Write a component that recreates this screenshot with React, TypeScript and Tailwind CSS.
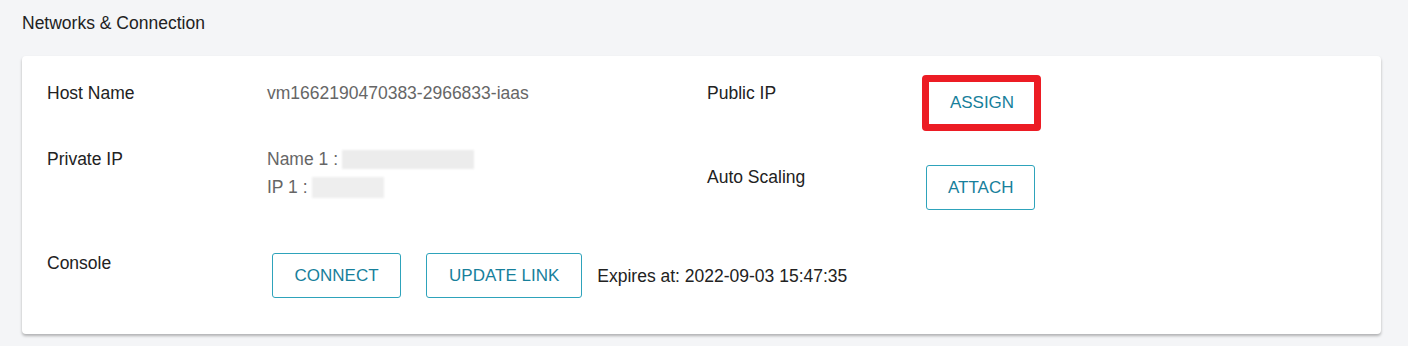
export default function App() {
  const font = { fontFamily: '"Liberation Sans", Arial, sans-serif' };
  const btn =
    'shrink-0 whitespace-nowrap h-[45px] border border-[#2ea3bb] rounded-[3px] bg-white text-[17px] leading-[23px] text-[#17809b]';

  return (
    <div className="min-h-[346px] w-[1408px] bg-[#f4f5f7] text-[17.5px] text-[#222]" style={font}>
      <div className="pl-[22px] pt-[9px] leading-[28px]">Networks &amp; Connection</div>

      <div className="ml-[22px] mt-[19px] w-[1359px] rounded-[4px] bg-white shadow-[0_2px_3px_rgba(0,0,0,0.28)] pl-[25px] pt-[19px] pb-[36px] flex leading-[28px]">
        {/* left half */}
        <div className="w-[660px] shrink-0 pt-[4px] flex flex-col">
          <div className="flex">
            <div className="w-[220px] shrink-0">Host Name</div>
            <div className="text-[#666]">vm1662190470383-2966833-iaas</div>
          </div>

          <div className="flex mt-[38px]">
            <div className="w-[220px] shrink-0">Private IP</div>
            <div className="text-[#666]">
              <div className="flex items-center">
                Name 1 :
                <span className="ml-[4px] h-[19px] w-[132px] bg-[#ececec] blur-[1px]" />
              </div>
              <div className="flex items-center">
                IP 1 :
                <span className="ml-[4px] h-[21px] w-[72px] bg-[#eeeeee] blur-[1px]" />
              </div>
            </div>
          </div>

          <div className="flex mt-[48px]">
            <div className="w-[225px] shrink-0">Console</div>
            <div className="flex items-center mt-[4px] whitespace-nowrap">
              <button className={`${btn} px-[21.5px]`}>CONNECT</button>
              <button className={`${btn} px-[22px] ml-[25px]`}>UPDATE LINK</button>
              <span className="ml-[15px]">Expires at: 2022-09-03 15:47:35</span>
            </div>
          </div>
        </div>

        {/* right half */}
        <div className="flex flex-col">
          <div className="flex items-start">
            <div className="w-[215px] shrink-0 mt-[4px]">Public IP</div>
            <div className="w-[119px] h-[56px] border-[7px] border-[#ec1c24] rounded-[4px] flex items-center justify-center text-[17px] text-[#17809b] pl-[1px]">
              ASSIGN
            </div>
          </div>
          <div className="flex items-start mt-[33px]">
            <div className="w-[219px] shrink-0 -mt-[1px]">Auto Scaling</div>
            <button className={`${btn} h-[44px] px-[21px] mt-[1px]`}>ATTACH</button>
          </div>
        </div>
      </div>
    </div>
  );
}
